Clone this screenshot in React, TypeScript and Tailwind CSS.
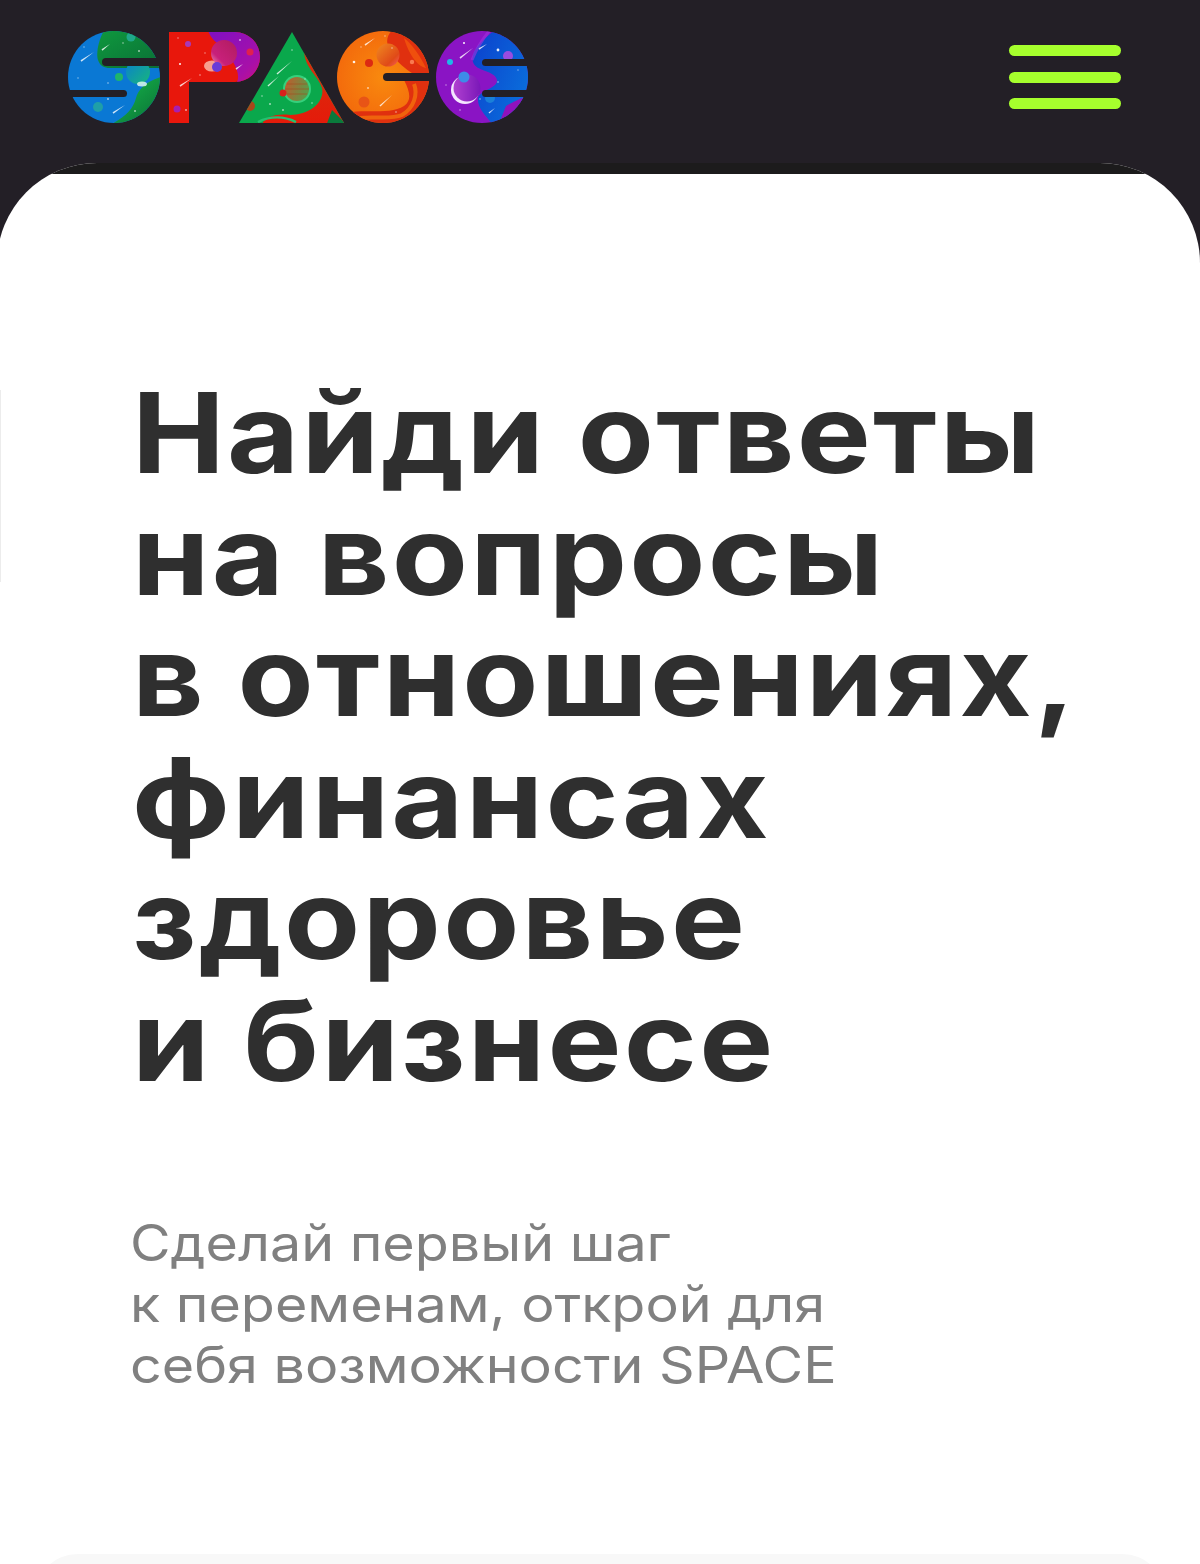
import React from 'react';

const dark = '#231f26';

function Stars({ items }: { items: number[][] }) {
    return (
        <g fill="#ffffff">
            {items.map(([x, y, r], i) => (
                <circle key={i} cx={x} cy={y} r={r} opacity={r > 1 ? 0.9 : 0.6} />
            ))}
        </g>
    );
}

// tapered streak: thick and bright at (x1,y1), thin at (x2,y2)
function Meteor({ x1, y1, x2, y2 }: { x1: number; y1: number; x2: number; y2: number }) {
    const len = Math.hypot(x2 - x1, y2 - y1);
    const nx = ((y2 - y1) / len) * 0.8;
    const ny = (-(x2 - x1) / len) * 0.8;
    return <polygon points={`${x1 + nx},${y1 + ny} ${x2},${y2} ${x1 - nx},${y1 - ny}`} fill="#ffffff" opacity="0.8" />;
}

function Logo() {
    return (
        <svg width="480" height="105" viewBox="60 25 480 105" className="block blur-[0.35px]">
            <defs>
                <clipPath id="cs"><circle cx="114" cy="77" r="46" /></clipPath>
                <clipPath id="cp"><path d="M169 32H235A25 25 0 0 1 235 82H189V123H169Z" /></clipPath>
                <clipPath id="ca"><path d="M292 32L344 123H239Z" /></clipPath>
                <clipPath id="cc"><circle cx="383" cy="77" r="46" /></clipPath>
                <clipPath id="ce"><circle cx="482" cy="77" r="46" /></clipPath>
                <linearGradient id="gs1" x1="0" y1="0" x2="1" y2="1">
                    <stop offset="0" stopColor="#0f9a3e" />
                    <stop offset="1" stopColor="#0a6d36" />
                </linearGradient>
                <linearGradient id="gs2" x1="0" y1="0" x2="1" y2="1">
                    <stop offset="0" stopColor="#14b8c8" />
                    <stop offset="0.35" stopColor="#12a144" />
                    <stop offset="1" stopColor="#0a6a34" />
                </linearGradient>
                <linearGradient id="gp" x1="0" y1="0" x2="1" y2="1">
                    <stop offset="0" stopColor="#7d10c4" />
                    <stop offset="0.7" stopColor="#a810a8" />
                    <stop offset="1" stopColor="#d01080" />
                </linearGradient>
                <linearGradient id="gpl" x1="0" y1="1" x2="1" y2="0">
                    <stop offset="0" stopColor="#f0a0c0" />
                    <stop offset="0.3" stopColor="#c8207a" />
                    <stop offset="1" stopColor="#b01c60" />
                </linearGradient>
                <linearGradient id="gtl" x1="0" y1="0" x2="1" y2="1">
                    <stop offset="0" stopColor="#0a7fd0" />
                    <stop offset="1" stopColor="#17b77a" />
                </linearGradient>
                <linearGradient id="gr" x1="0" y1="0" x2="0" y2="1">
                    <stop offset="0" stopColor="#d5300c" />
                    <stop offset="1" stopColor="#e51a0a" />
                </linearGradient>
                <linearGradient id="gpl2" x1="0" y1="0" x2="1" y2="0.4">
                    <stop offset="0" stopColor="#c8562a" />
                    <stop offset="1" stopColor="#5c9a48" />
                </linearGradient>
                <radialGradient id="gor">
                    <stop offset="0" stopColor="#f98a0e" />
                    <stop offset="1" stopColor="#f36a0c" />
                </radialGradient>
                <linearGradient id="gop" x1="0" y1="0" x2="1" y2="1">
                    <stop offset="0" stopColor="#f08a20" />
                    <stop offset="0.7" stopColor="#e04a18" />
                    <stop offset="1" stopColor="#f86060" />
                </linearGradient>
                <linearGradient id="gb" x1="0" y1="0" x2="1" y2="0.6">
                    <stop offset="0" stopColor="#0c3fcc" />
                    <stop offset="1" stopColor="#0a6fdc" />
                </linearGradient>
                <linearGradient id="gvp" x1="0" y1="0" x2="1" y2="0">
                    <stop offset="0" stopColor="#b040d0" />
                    <stop offset="1" stopColor="#7a18b8" />
                </linearGradient>
            </defs>

            {/* S */}
            <g clipPath="url(#cs)">
                <rect x="66" y="30" width="96" height="96" fill="#0a78d4" />
                <path d="M105 29C98 40 96 54 98 60C100 66 104 68 110 68H165V29Z" fill="url(#gs1)" />
                <path d="M165 76C146 80 138 90 136 98C133 110 124 118 108 126H165Z" fill="url(#gs2)" />
                <circle cx="138" cy="72" r="12" fill="url(#gtl)" />
                <ellipse cx="142" cy="84" rx="5" ry="2.5" fill="#e8fff0" opacity="0.8" />
                <circle cx="119" cy="77" r="4" fill="#1fb56c" />
                <circle cx="98" cy="107" r="5" fill="#1f9fa8" />
                <circle cx="131" cy="37" r="4.5" fill="#1fa88a" />
                <Meteor x1={81} y1={61} x2={94} y2={52} />
                <Meteor x1={113} y1={113} x2={125} y2={105} />
                <Meteor x1={102} y1={50} x2={110} y2={44} />
                <Stars items={[[139, 51, 1], [123, 43, 0.8], [84, 47, 0.7], [78, 78, 0.7], [108, 83, 0.8], [135, 111, 1], [108, 99, 1]]} />
            </g>
            <rect x="102" y="58" width="70" height="8" rx="4" fill={dark} />
            <rect x="50" y="90" width="77" height="7" rx="3.5" fill={dark} />

            {/* P */}
            <g clipPath="url(#cp)">
                <rect x="165" y="30" width="100" height="95" fill="#e8170c" />
                <path d="M208 30C212 45 226 44 232 60C238 70 240 78 236 84H265V30Z" fill="url(#gp)" />
                <ellipse cx="212" cy="66" rx="8" ry="5.5" fill="#ffd9c8" opacity="0.7" />
                <circle cx="224" cy="53" r="13" fill="url(#gpl)" />
                <circle cx="217" cy="67" r="5" fill="#6a3cd8" />
                <circle cx="250" cy="52" r="3.5" fill="#e0204e" />
                <circle cx="188" cy="44" r="3" fill="#a838b8" />
                <circle cx="177" cy="109" r="3.5" fill="#a81eb0" />
                <Meteor x1={180} y1={86} x2={192} y2={78} />
                <Meteor x1={236} y1={69} x2={243} y2={64} />
                <Stars items={[[180, 64, 1.1], [200, 75, 0.8], [186, 110, 1], [240, 40, 1], [178, 38, 0.7], [205, 53, 0.7]]} />
            </g>

            {/* A */}
            <g clipPath="url(#ca)">
                <rect x="235" y="30" width="112" height="95" fill="#0aa84c" />
                <path d="M304 52L348 126H262C262 118 276 113 290 115C310 115 325 102 322 88C318 75 306 70 304 52Z" fill="url(#gr)" />
                <path d="M332 110L348 126H326Z" fill="#0a7a3c" />
                <path d="M258 122C270 116 284 116 296 122" fill="none" stroke="#26c070" strokeWidth="2.5" />
                <circle cx="297" cy="89" r="14" fill="#35d07c" />
                <circle cx="297" cy="89" r="12" fill="url(#gpl2)" />
                <path d="M287 84H307M285 89H309M287 94H307" stroke="#a84a20" strokeWidth="1.2" opacity="0.6" />
                <circle cx="283" cy="93" r="3.5" fill="#d8201c" />
                <circle cx="250" cy="106" r="5" fill="#a8481a" />
                <Meteor x1={277} y1={74} x2={292} y2={61} />
                <Meteor x1={268} y1={86} x2={279} y2={76} />
                <Stars items={[[292, 50, 0.8], [270, 104, 1], [283, 110, 1], [262, 96, 0.8], [312, 103, 0.8], [305, 79, 0.7]]} />
            </g>

            {/* C */}
            <g clipPath="url(#cc)">
                <rect x="335" y="29" width="96" height="96" fill="url(#gor)" />
                <path d="M395 28C378 40 392 58 405 68C412 74 420 78 432 78V28Z" fill="#e0300f" />
                <path d="M404 38C412 44 420 56 426 68C416 66 408 52 404 38Z" fill="#f2580c" opacity="0.8" />
                <path d="M432 80H404C410 92 412 100 404 106C392 114 370 110 352 112L356 126H432Z" fill="#e0300f" />
                <path d="M414 84C418 94 414 108 402 115C390 120 376 116 360 118" fill="none" stroke="#f2700c" strokeWidth="4" opacity="0.8" />
                <circle cx="388" cy="55" r="11.5" fill="url(#gop)" />
                <circle cx="369" cy="63" r="4" fill="#dc2a12" />
                <circle cx="364" cy="102" r="5.5" fill="#e85416" />
                <circle cx="412" cy="62" r="2.2" fill="#f97a50" />
                <Meteor x1={365} y1={45} x2={375} y2={38} />
                <Meteor x1={380} y1={106} x2={392} y2={95} />
                <Stars items={[[354, 62, 1.3], [368, 88, 1], [392, 48, 0.8], [361, 47, 0.7], [396, 112, 0.8], [385, 36, 0.7]]} />
            </g>
            <rect x="383" y="73" width="60" height="8" rx="4" fill={dark} />

            {/* E */}
            <g clipPath="url(#ce)">
                <rect x="434" y="29" width="96" height="96" fill="#8a14c4" />
                <path d="M497 28C482 40 470 52 473 62C476 72 495 70 497 80C498 88 480 90 478 98C477 108 486 116 494 126H532V28Z" fill="url(#gb)" />
                <path d="M506 106C516 100 525 96 532 96V126H498Z" fill="#9012bc" />
                <path d="M490 30C480 42 476 50 472 60" fill="none" stroke="#a030e0" strokeWidth="3" opacity="0.6" />
                <circle cx="465" cy="90" r="14" fill="#f4e6ff" />
                <circle cx="467" cy="88" r="13.5" fill="url(#gvp)" />
                <circle cx="464" cy="77" r="5.5" fill="#3d8ce8" />
                <circle cx="450" cy="62" r="3" fill="#1fb8e8" />
                <circle cx="508" cy="56" r="5" fill="#9a4ce0" />
                <circle cx="490" cy="98" r="5" fill="#1a80d8" />
                <Meteor x1={460} y1={58} x2={473} y2={48} />
                <Meteor x1={479} y1={49} x2={487} y2={44} />
                <Meteor x1={489} y1={113} x2={495} y2={108} />
                <Stars items={[[498, 50, 1.4], [464, 43, 1.1], [480, 99, 0.8], [446, 85, 0.7], [460, 110, 0.8], [498, 82, 0.8], [518, 70, 0.7]]} />
            </g>
            <rect x="482" y="59" width="60" height="7" rx="3.5" fill={dark} />
            <rect x="482" y="90" width="60" height="7" rx="3.5" fill={dark} />
        </svg>
    );
}

export default function App() {
    return (
        <div className="w-[1200px] h-[1564px] overflow-hidden bg-[#231f26] font-['Inter',sans-serif]">
            <header className="h-[163px] flex justify-between items-start pl-[60px] pr-[79px]">
                <div className="pt-[25px]">
                    <Logo />
                </div>
                <button className="pt-[45px] flex flex-col gap-[15.5px] w-[112px]">
                    <span className="block h-[11px] rounded-full bg-[#a6ff2d]" />
                    <span className="block h-[11px] rounded-full bg-[#a6ff2d]" />
                    <span className="block h-[11px] rounded-full bg-[#a6ff2d]" />
                </button>
            </header>

            <main className="relative h-[1401px] -ml-[3px] overflow-hidden rounded-t-[100px] bg-white">
                <div className="h-[11px] bg-[#1c1b1c]" />
                <div className="absolute left-[3px] top-[227px] h-[192px] w-px bg-[#ececec]" />
                <div className="pl-[135px] pt-[198px]">
                    <h1 className="origin-left scale-x-[1.12] text-[111px] leading-[121.6px] font-bold text-[#2f2f2f] tracking-[2px] whitespace-nowrap">
                        Найди ответы<br />
                        на вопросы<br />
                        в отношениях,<br />
                        финансах<br />
                        здоровье<br />
                        и бизнесе
                    </h1>
                    <p className="-ml-[2px] mt-[111px] origin-left scale-x-[1.112] text-[50px] leading-[61px] font-normal text-[#808080] whitespace-nowrap">
                        Сделай первый шаг<br />
                        к переменам, открой для<br />
                        себя возможности SPACE
                    </p>
                </div>
                <div className="absolute left-[37px] right-[34px] -bottom-[50px] h-[60px] rounded-t-[44px] bg-[#f8f8f8]" />
            </main>
        </div>
    );
}
